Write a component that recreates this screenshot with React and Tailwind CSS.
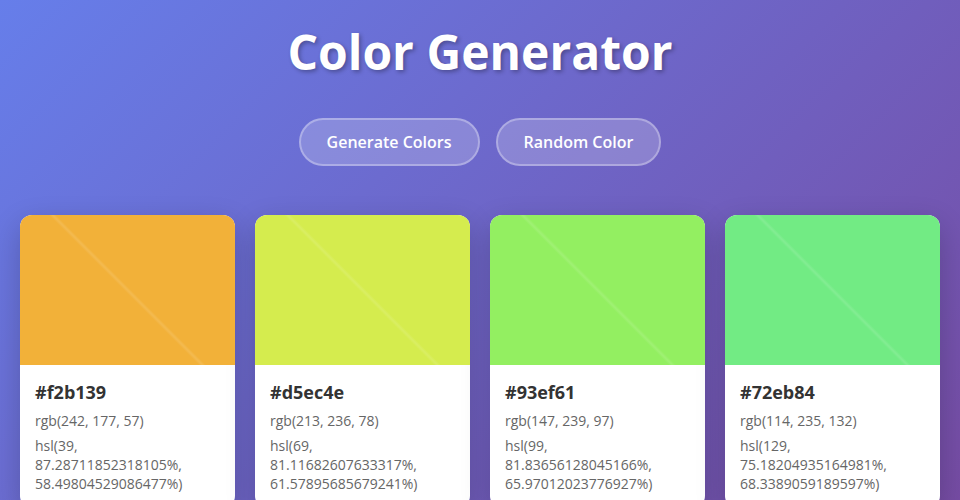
import React from 'react';

const colors = [
    { hex: '#f2b139', rgb: 'rgb(242, 177, 57)', hsl: 'hsl(39, 87.28711852318105%, 58.49804529086477%)' },
    { hex: '#d5ec4e', rgb: 'rgb(213, 236, 78)', hsl: 'hsl(69, 81.11682607633317%, 61.57895685679241%)' },
    { hex: '#93ef61', rgb: 'rgb(147, 239, 97)', hsl: 'hsl(99, 81.83656128045166%, 65.97012023776927%)' },
    { hex: '#72eb84', rgb: 'rgb(114, 235, 132)', hsl: 'hsl(129, 75.18204935164981%, 68.3389059189597%)' },
];

function ColorCard({ color }) {
    return (
        <div className="bg-white rounded-xl overflow-hidden shadow-[0_10px_30px_rgba(0,0,0,0.2)]">
            <div className="relative h-[150px]" style={{ backgroundColor: color.hex }}>
                {/* faint diagonal shine */}
                <div className="absolute inset-0 bg-[linear-gradient(45deg,transparent_49%,rgba(255,255,255,0.12)_50%,transparent_51%)]" />
            </div>
            <div className="p-[15px]">
                <p className="text-[18px] leading-[24.5px] font-bold text-[#333] mb-[7px]">{color.hex}</p>
                <p className="text-[14px] leading-[19px] text-[#666] mb-[6px]">{color.rgb}</p>
                <p className="text-[14px] leading-[19px] text-[#666]">{color.hsl}</p>
            </div>
        </div>
    );
}

export default function App() {
    return (
        <div className="min-h-screen bg-[linear-gradient(135deg,#667eea_0%,#764ba2_100%)] p-5 font-['Open_Sans',sans-serif]">
            <h1 className="mt-[3px] text-center text-white text-[48px] leading-[57.6px] font-bold [text-shadow:2px_2px_4px_rgba(0,0,0,0.3)] mb-[37px]">
                Color Generator
            </h1>

            <div className="flex justify-center gap-4 mb-[49px]">
                <button className="px-[26px] py-[10px] rounded-full border-2 border-white/30 bg-white/20 text-white text-base leading-6 font-semibold">
                    Generate Colors
                </button>
                <button className="px-[26px] py-[10px] rounded-full border-2 border-white/30 bg-white/20 text-white text-base leading-6 font-semibold">
                    Random Color
                </button>
            </div>

            <div className="grid grid-cols-4 gap-5">
                {colors.map((c) => (
                    <ColorCard key={c.hex} color={c} />
                ))}
            </div>
        </div>
    );
}
